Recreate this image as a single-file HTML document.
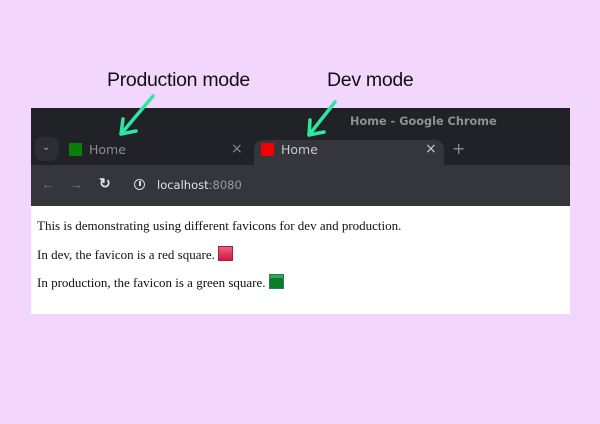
<!DOCTYPE html>
<html><head><meta charset="utf-8"><style>
body{margin:0;width:600px;height:424px;background:#f3d6fb;position:relative;overflow:hidden;font-family:"Liberation Sans",sans-serif}
.a{position:absolute}
.lbl{font-size:19.5px;color:#111;letter-spacing:-0.3px}
.win{left:31px;top:108px;width:539px;height:206px;background:#202227}
.title{left:319px;top:7px;width:200px;color:#8e9096;font-size:11.3px;font-weight:bold;font-family:"DejaVu Sans",sans-serif}
.tab{font-family:"DejaVu Sans",sans-serif;font-size:12.5px;color:#8a8c92}
.tb{left:0;top:57px;width:539px;height:41px;background:#35363b}
.content{left:0;top:98px;width:539px;height:108px;background:#fff;font-family:"Liberation Serif",serif;font-size:13px;color:#111}
</style></head><body>
<div class="a lbl" style="left:107px;top:69px">Production mode</div>
<div class="a lbl" style="left:327px;top:69px">Dev mode</div>
<div class="a win">
 <div class="a title">Home - Google Chrome</div>
 <div class="a" style="left:4px;top:29px;width:24px;height:24px;border-radius:8px;background:#2c2d32"></div>
 <div class="a" style="left:11px;top:34px;color:#aaa;font-size:10px">&#8964;</div>
 <div class="a" style="left:38px;top:35px;width:13px;height:13px;background:#0a7d0a"></div>
 <div class="a tab" style="left:58px;top:34px">Home</div>
 <div class="a tab" style="left:200px;top:33px;font-size:14px">×</div>
 <div class="a" style="left:223px;top:32px;width:190px;height:30px;background:#35363b;border-radius:9px 9px 0 0"></div>
 <div class="a" style="left:230px;top:35px;width:13px;height:13px;background:#f40000"></div>
 <div class="a tab" style="left:250px;top:34px;color:#c6c8cc">Home</div>
 <div class="a tab" style="left:394px;top:33px;font-size:14px;color:#c6c8cc">×</div>
 <div class="a tab" style="left:421px;top:31px;font-size:16px">+</div>
 <div class="a tb">
  <div class="a" style="left:10px;top:11px;color:#6d6f74;font-size:14px">&#8592;</div>
  <div class="a" style="left:38px;top:11px;color:#6d6f74;font-size:14px">&#8594;</div>
  <div class="a" style="left:68px;top:10px;color:#e4e4e4;font-size:14px;font-weight:bold">&#8635;</div>
  <div class="a" style="left:103px;top:14px;width:9px;height:9px;border:1.5px solid #ddd;border-radius:50%"></div>
  <div class="a" style="left:108px;top:16px;width:1.5px;height:5px;background:#ddd"></div>
  <div class="a" style="left:126px;top:13px;color:#e4e4e4;font-size:11.5px;font-family:'DejaVu Sans',sans-serif">localhost<span style="color:#9a9ca0">:8080</span></div>
 </div>
 <div class="a content">
  <div class="a" style="left:6px;top:12px;white-space:nowrap">This is demonstrating using different favicons for dev and production.</div>
  <div class="a" style="left:6px;top:40px;white-space:nowrap">In dev, the favicon is a red square. <span style="display:inline-block;width:13px;height:13px;background:linear-gradient(#f06080,#d01840);border:1px solid #a02040;vertical-align:-2px"></span></div>
  <div class="a" style="left:6px;top:68px;white-space:nowrap">In production, the favicon is a green square. <span style="display:inline-block;width:13px;height:13px;background:#0b7d2a;border:1px solid #2a8050;vertical-align:-2px;box-shadow:inset 0 3px 0 #3aa060"></span></div>
 </div>
</div>
<svg class="a" style="left:0;top:0" width="600" height="424">
 <g stroke="#2fe6a0" stroke-width="3.5" stroke-linecap="round" stroke-linejoin="round" fill="none">
  <path d="M153 96 L121 134 M121 134 L136 131 M121 134 L123 119"/>
  <path d="M335 102 L309 135 M309 135 L324 132 M309 135 L310 120"/>
 </g>
</svg>
</body></html>
